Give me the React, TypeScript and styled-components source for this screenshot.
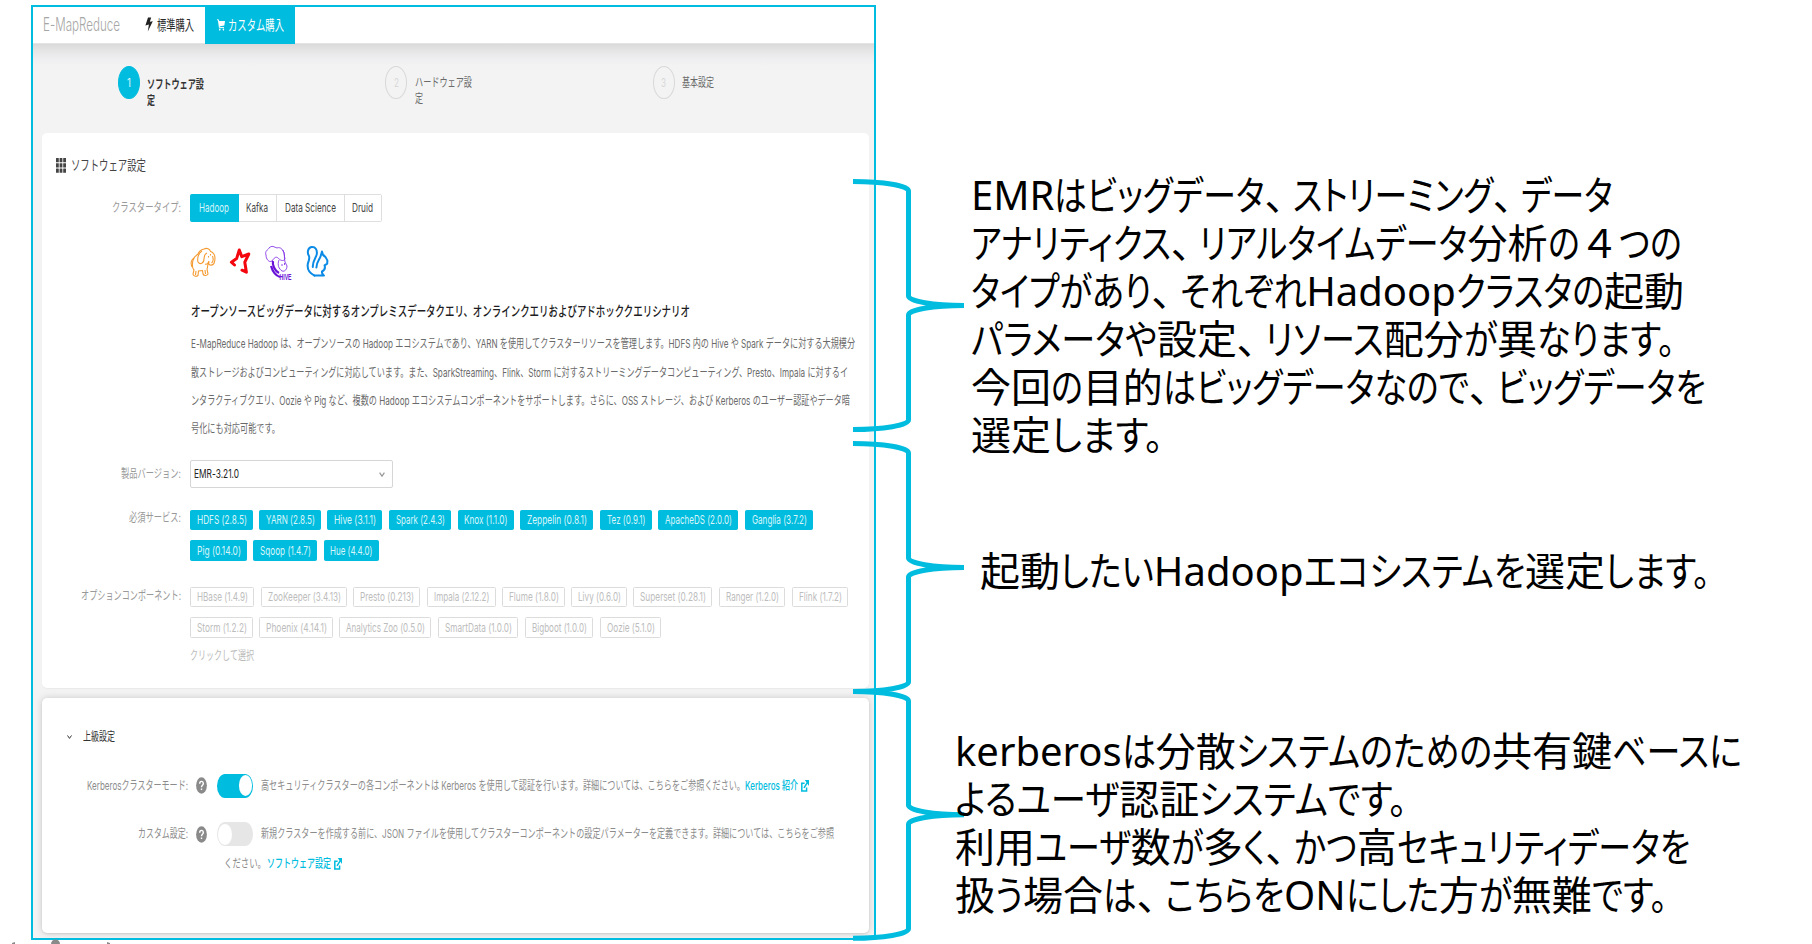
import React, { ReactNode, useLayoutEffect, useRef, useState } from "react";
import styled, { createGlobalStyle } from "styled-components";

const CYAN = "#00bcde";
const UI = `Inter, Roboto, "Noto Sans CJK JP", sans-serif`;

const Global = createGlobalStyle`
  html, body { margin: 0; padding: 0; background: #fff; }
  * { box-sizing: border-box; }
  svg { display: block; flex: none; }
`;

/* ---------- condensed text ---------- */

interface TextStyle {
  $w: number;
  $size?: number;
  $lh?: number;
  $color?: string;
  $weight?: number;
  $ml?: number;
}

const TextBox = styled.span<TextStyle>`
  display: block;
  flex: none;
  width: ${(p) => p.$w}px;
  height: ${(p) => p.$lh ?? 16}px;
  margin-left: ${(p) => p.$ml ?? 0}px;
  font-size: ${(p) => p.$size ?? 12}px;
  line-height: ${(p) => p.$lh ?? 16}px;
  color: ${(p) => p.$color ?? "#6a6a6a"};
  font-weight: ${(p) => p.$weight ?? 400};
  font-feature-settings: "calt" 0;
  white-space: nowrap;
`;

const TextInner = styled.span`
  display: inline-block;
  transform-origin: 0 50%;
`;

interface TextProps {
  w: number;
  size?: number;
  lh?: number;
  color?: string;
  weight?: number;
  ml?: number;
  children: ReactNode;
}

/** One line of text condensed horizontally to the given width. */
function Text({ w, size, lh, color, weight, ml, children }: TextProps) {
  const ref = useRef<HTMLSpanElement>(null);
  const [scale, setScale] = useState(1);
  useLayoutEffect(() => {
    if (ref.current) {
      const natural = parseFloat(getComputedStyle(ref.current).width);
      if (natural > 0) setScale(w / natural);
    }
  }, [w, children]);
  return (
    <TextBox $w={w} $size={size} $lh={lh} $color={color} $weight={weight} $ml={ml}>
      <TextInner ref={ref} style={{ transform: `scaleX(${scale})` }}>
        {children}
      </TextInner>
    </TextBox>
  );
}

/* ---------- page ---------- */

const Page = styled.div`
  position: relative;
  display: flex;
  width: 1812px;
  height: 944px;
  overflow: hidden;
  background: #fff;
  padding: 5px 0 0 31px;
`;

const Frame = styled.section`
  flex: none;
  width: 845px;
  height: 935px;
  overflow: hidden;
  border: 2px solid ${CYAN};
  background: #f3f3f3;
  font-family: ${UI};
`;

const Header = styled.header`
  display: flex;
  align-items: center;
  height: 37px;
  padding-left: 10px;
  background: #fff;
  border-bottom: 1px solid #e4e4e4;
`;

const Tab = styled.div<{ $active?: boolean }>`
  display: flex;
  align-items: center;
  height: 37px;
  width: ${(p) => (p.$active ? 90 : 62)}px;
  margin-left: ${(p) => (p.$active ? 0 : 23)}px;
  padding: 0 0 2px ${(p) => (p.$active ? 11.5 : 1.5)}px;
  margin-bottom: -1px;
  background: ${(p) => (p.$active ? CYAN : "transparent")};
`;

const Steps = styled.div`
  display: flex;
  height: 89px;
  padding: 22px 0 0 84.5px;
  background: linear-gradient(#dadada 0, #e6e6e7 7px, #efeff1 15px, #f3f3f3 22px);
`;

const Step = styled.div`
  display: flex;
  flex: none;
  width: 267.6px;
`;

const StepDot = styled.div<{ $on?: boolean }>`
  display: flex;
  flex: none;
  justify-content: center;
  align-items: center;
  width: 22px;
  height: 33px;
  border-radius: 50%;
  border: 1.5px solid ${(p) => (p.$on ? CYAN : "#d8d8d8")};
  background: ${(p) => (p.$on ? CYAN : "transparent")};
`;

const StepLabel = styled.div<{ $top: number }>`
  padding: ${(p) => p.$top}px 0 0 7.5px;
`;

const Card = styled.div<{ $h: number; $raised?: boolean }>`
  display: flow-root;
  width: 827px;
  height: ${(p) => p.$h}px;
  margin: 0 0 10px 9px;
  border-radius: 5px;
  background: #fff;
  box-shadow: ${(p) =>
    p.$raised ? "0 0 7px rgba(0,0,0,.17), 0 1px 2px rgba(0,0,0,.08)" : "0 1px 1px rgba(0,0,0,.04)"};
`;

const Row = styled.div<{ $mt?: number; $pl?: number; $h?: number }>`
  display: flex;
  align-items: center;
  margin-top: ${(p) => p.$mt ?? 0}px;
  padding-left: ${(p) => p.$pl ?? 0}px;
  height: ${(p) => p.$h ?? 16}px;
`;

const Description = styled.div`
  padding: 9px 0 0 148.5px;
`;

const Field = styled.div<{ $mt?: number }>`
  display: flex;
  align-items: flex-start;
  margin-top: ${(p) => p.$mt ?? 0}px;
`;

const FieldLabel = styled.div<{ $top?: number }>`
  display: flex;
  justify-content: flex-end;
  flex: none;
  width: 138.5px;
  margin-right: 9.5px;
  padding-top: ${(p) => p.$top ?? 0}px;
`;

const Segments = styled.div`
  display: flex;
  width: 192px;
  height: 28px;
  border: 1px solid #dedede;
  border-radius: 2px;
`;

const Segment = styled.div<{ $w: number; $on?: boolean }>`
  display: flex;
  align-items: center;
  justify-content: center;
  width: ${(p) => p.$w}px;
  height: ${(p) => (p.$on ? 28 : 26)}px;
  margin: ${(p) => (p.$on ? "-1px 0 0 -1px" : "0")};
  border-radius: ${(p) => (p.$on ? "2px 0 0 2px" : "0")};
  background: ${(p) => (p.$on ? CYAN : "#fff")};
  & + & { border-right: 1px solid #dedede; }
  &:last-child { border-right: 0; }
`;

const Logos = styled.div`
  display: flex;
  height: 36px;
  margin: 23px 0 0 148px;
`;

const Select = styled.div`
  display: flex;
  align-items: center;
  justify-content: space-between;
  width: 203px;
  height: 28px;
  padding: 0 7px 0 3px;
  border: 1px solid #d6d6d6;
  border-radius: 2px;
`;

const TagRow = styled.div<{ $mt?: number }>`
  display: flex;
  height: 21px;
  margin-top: ${(p) => p.$mt ?? 0}px;
`;

const Tag = styled.div<{ $w: number; $gap: number; $solid?: boolean }>`
  display: flex;
  flex: none;
  align-items: center;
  justify-content: center;
  width: ${(p) => p.$w}px;
  height: 20.5px;
  margin-left: ${(p) => p.$gap}px;
  border: 1px solid ${(p) => (p.$solid ? CYAN : "#dcdcdc")};
  border-radius: 1.5px;
  background: ${(p) => (p.$solid ? CYAN : "#fff")};
`;

const Switch = styled.div<{ $on?: boolean }>`
  display: flex;
  align-items: center;
  justify-content: ${(p) => (p.$on ? "flex-end" : "flex-start")};
  width: 36px;
  height: 24px;
  margin-left: 10px;
  padding: 0 1px;
  border-radius: 8px / 12px;
  background: ${(p) => (p.$on ? CYAN : "#e6e6e6")};
`;

const Knob = styled.div`
  width: 13.5px;
  height: 21px;
  border-radius: 50%;
  background: #fff;
`;

const OptionLabel = styled.div`
  display: flex;
  justify-content: flex-end;
  width: 145.5px;
  margin-right: 8.5px;
`;

/* ---------- annotations ---------- */

const Notes = styled.aside`
  position: relative;
  z-index: 2;
  flex: none;
  padding-top: 166px;
  margin-left: 79px;
  font-family: "Noto Sans", "Noto Sans CJK JP", sans-serif;
  font-size: 40px;
  line-height: 48px;
  color: #000;
`;

const Note = styled.div<{ $ml: number; $mb: number }>`
  margin: 0 0 ${(p) => p.$mb}px ${(p) => p.$ml}px;
`;

const NoteRow = styled.div`
  display: flex;
  height: 48px;
  white-space: nowrap;
`;

const Run = styled.span<{ $kind: "kana" | "comma" | "wide" | "plain" }>`
  display: block;
  flex: none;
  transform-origin: 0 50%;
  font-feature-settings: ${(p) => (p.$kind === "wide" ? "normal" : '"palt"')};
  padding-right: ${(p) => (p.$kind === "comma" ? 8 : 0)}px;
`;

function kindOf(s: string) {
  if (s === "、") return "comma" as const;
  if (s === "４") return "wide" as const;
  return /^[\u3040-\u30ff。]/.test(s) ? ("kana" as const) : ("plain" as const);
}

/** A line whose kana runs are condensed until it fills the given width. */
function NoteLine({ text, w }: { text: string; w: number }) {
  const runs = text.match(/、|４|[\u3040-\u30ff。]+|[^\u3040-\u30ff。、４]+/g) ?? [];
  const ref = useRef<HTMLDivElement>(null);
  const [fit, setFit] = useState<{ k: number; widths: number[] }>({ k: 1, widths: [] });
  useLayoutEffect(() => {
    if (!ref.current) return;
    const widths = Array.from(ref.current.children).map((el) => parseFloat(getComputedStyle(el).width));
    let kana = 0;
    let rest = 0;
    runs.forEach((r, i) => {
      if (kindOf(r) === "kana") kana += widths[i];
      else rest += widths[i];
    });
    setFit({ k: (w - rest) / kana, widths });
  }, [text, w]);
  return (
    <NoteRow ref={ref}>
      {runs.map((r, i) => {
        const kind = kindOf(r);
        const squeeze =
          kind === "kana" && fit.widths.length
            ? { transform: `scaleX(${fit.k})`, marginRight: (fit.k - 1) * fit.widths[i] }
            : undefined;
        return (
          <Run key={i} $kind={kind} style={squeeze}>
            {r}
          </Run>
        );
      })}
    </NoteRow>
  );
}

const Braces = styled.svg`
  position: absolute;
  z-index: 1;
  left: 0;
  top: 0;
`;

function brace(top: number, tip: number, bottom: number) {
  return (
    `M853 ${top} A55.5 9.5 0 0 1 908.5 ${top + 9.5} V${tip - 9.5} A55.5 9.5 0 0 0 964 ${tip} ` +
    `A55.5 9.5 0 0 0 908.5 ${tip + 9.5} V${bottom - 9.5} A55.5 9.5 0 0 1 853 ${bottom}`
  );
}

/* ---------- icons ---------- */

const Bolt = () => (
  <svg width="8" height="15" viewBox="0 0 8 15">
    <path d="M3 0.5H6.2L4.8 4.8L7.8 4.2L2.8 14.6L3.9 7.6L0.4 8.4Z" fill="#222" />
  </svg>
);

const Cart = () => (
  <svg width="8" height="12" viewBox="0 0 8 12">
    <path d="M0 .8H1.4L2.4 8.6H7" stroke="#fff" strokeWidth="1" fill="none" />
    <path d="M1.7 2H8L7.3 6.6L2.3 7.4Z" fill="#fff" />
    <ellipse cx="2.8" cy="10.6" rx=".8" ry="1.1" fill="#fff" />
    <ellipse cx="6.4" cy="10.6" rx=".8" ry="1.1" fill="#fff" />
  </svg>
);

const GridIcon = () => (
  <svg width="10" height="15" viewBox="0 0 10 15" fill="#444">
    {[0, 1, 2].map((r) =>
      [0, 1, 2].map((c) => (
        <rect key={`${r}${c}`} x={c * 3.6} y={r * 5.3} width="2.8" height="4.2" rx=".3" />
      ))
    )}
  </svg>
);

const Elephant = () => (
  <svg width="26" height="34" viewBox="0 0 26 34" fill="none" stroke="#f59a30" strokeWidth="1.1">
    <path d="M8 9C9 6 12 4.5 14 4C17 2.5 20 4 20.5 6.5C23 7 25 10 25 13C25 17 24 21 20 20C18.5 19.5 18.5 18 19 17C17 20 18 22 17 24L18 29C17 31 13.5 31 13 29L12.5 25.5L8.5 26L8 30.5C6 32 3 31 3 29L4 25C2 23 1.5 17 4.5 12Z" />
    <path d="M12 6C8.5 8 7 13 8 17C10 20 14 18.5 14 14C14.5 11 14 9 17 8M18.5 11V12.5M20.5 9V10.5M15 19C17 20 18.5 18 19 16M22.5 11C23.5 14 23 17 21.5 18" />
    <path d="M4 13C1 15 .8 19 2 22M6 26L5.5 30M15 25L15.5 29" />
  </svg>
);

const Star = () => (
  <svg width="22" height="34" viewBox="0 0 22 34">
    <path
      d="M5.5 20L2.4 17.2L7.6 13.6L10.3 5L12.8 11.6L19.8 9L15.8 17.2L17.4 27.2L13 25.2"
      fill="none" stroke="#f3060d" strokeWidth="3" strokeLinejoin="round" strokeLinecap="round"
    />
  </svg>
);

const HiveWord = styled.text`
  font: 700 9px "Liberation Sans", sans-serif;
`;

const Hive = () => (
  <svg width="27" height="36" viewBox="0 0 27 36" fill="none" stroke="#8436e6" strokeWidth=".9">
    <path d="M1 10C-.5 6 3 5 4 3C7 0 9 2 12 3C14 2 17 3 18 6C20 8 19 11 20 14C18 17 15 15 13 13C11 11 9 13 7 16C4 18 1 14 1 10Z" />
    <path d="M18 5C20 9 19 13 20 17L22 21C22 24 20 27 17 26C14 24 12 20 14 15M17 19V21M19.5 18V20" />
    <path d="M8 16C7 20 10 26 14 28M6 21C8 28 12 31 15 32" strokeWidth="2.2" stroke="#6a13d8" />
    <HiveWord x="14.5" y="34.8" textLength="12" lengthAdjust="spacingAndGlyphs" fill="#6a13d8" stroke="none">HIVE</HiveWord>
  </svg>
);

const Squirrel = () => (
  <svg width="24" height="34" viewBox="0 0 24 34" fill="none" stroke="#0b8ae6" strokeWidth="2" strokeLinejoin="round" strokeLinecap="round">
    <path d="M8.5 30.6C3 28 1 24 1.8 19C2.4 16 4 14 3 11C1 8 1.5 2.8 5.5 2C9.5 1.5 11.3 5 10.8 9C10.3 13 6.6 15 6.8 22" />
    <path d="M8.5 30.6H18C17 29.5 15.6 29 16 26.5C18 25.5 19.4 23 18.6 20.4L21.2 18.6L21.4 15.4C20.6 12.6 19 11 17 10L16 6.5L14.6 11.2C13.8 14.5 10.6 16.5 10.4 22.5" />
  </svg>
);

const Help = () => (
  <svg width="11" height="17" viewBox="0 0 11 17">
    <ellipse cx="5.5" cy="8.5" rx="5.4" ry="8.3" fill="#8a8a8a" />
    <path d="M3.7 6.7C3.7 3.6 7.3 3.6 7.3 6.5C7.3 8.4 5.5 8.3 5.5 10.2M5.5 11.4V13" stroke="#fff" strokeWidth="1.4" fill="none" />
  </svg>
);

const External = () => (
  <svg width="8" height="12" viewBox="0 0 8 12" fill="none" stroke={CYAN} strokeWidth="1.5">
    <path d="M3.6 3.2H.8V11H5.6V7.4M3 7.8L6.8 1.8" />
    <path d="M3.8 0H8V6Z" fill={CYAN} stroke="none" />
  </svg>
);

const Chevron = ({ w, h, color }: { w: number; h: number; color: string }) => (
  <svg width={w} height={h} viewBox="0 0 6 5" preserveAspectRatio="none">
    <path d="M.6 .6L3 4.2L5.4 .6" fill="none" stroke={color} strokeWidth="1.2" />
  </svg>
);

const Specks = styled.svg`
  position: absolute;
  left: 0;
  top: 936px;
`;

/* ---------- data ---------- */

type TagSpec = [label: string, left: number, right: number];

const required: TagSpec[][] = [
  [
    ["HDFS (2.8.5)", 190, 253], ["YARN (2.8.5)", 259, 321], ["Hive (3.1.1)", 327, 382],
    ["Spark (2.4.3)", 389, 451], ["Knox (1.1.0)", 457.5, 514], ["Zeppelin (0.8.1)", 520, 593],
    ["Tez (0.9.1)", 600, 651.5], ["ApacheDS (2.0.0)", 658, 738], ["Ganglia (3.7.2)", 745, 813],
  ],
  [["Pig (0.14.0)", 190, 247], ["Sqoop (1.4.7)", 253, 317], ["Hue (4.4.0)", 323.5, 379]],
];

const optional: TagSpec[][] = [
  [
    ["HBase (1.4.9)", 190, 254], ["ZooKeeper (3.4.13)", 261, 347], ["Presto (0.213)", 353, 420],
    ["Impala (2.12.2)", 427, 495.5], ["Flume (1.8.0)", 502, 565], ["Livy (0.6.0)", 571, 627],
    ["Superset (0.28.1)", 633, 712], ["Ranger (1.2.0)", 719, 785], ["Flink (1.7.2)", 792, 848],
  ],
  [
    ["Storm (1.2.2)", 190, 253], ["Phoenix (4.14.1)", 259, 333], ["Analytics Zoo (0.5.0)", 339, 431],
    ["SmartData (1.0.0)", 438, 518], ["Bigboot (1.0.0)", 525, 593], ["Oozie (5.1.0)", 600, 661],
  ],
];

function Tags({ rows, solid }: { rows: TagSpec[][]; solid?: boolean }) {
  return (
    <div>
      {rows.map((row, r) => (
        <TagRow key={r} $mt={r ? 9.5 : 0}>
          {row.map(([label, left, right], i) => (
            <Tag key={label} $w={right - left} $gap={i ? left - row[i - 1][2] : 0} $solid={solid}>
              <Text w={right - left - 13} color={solid ? "#d9f6fb" : "#bdbdbd"}>{label}</Text>
            </Tag>
          ))}
        </TagRow>
      ))}
    </div>
  );
}

const notes: { ml: number; mb: number; lines: [string, number][] }[] = [
  {
    ml: 16, mb: 88,
    lines: [
      ["EMRはビッグデータ、ストリーミング、データ", 642],
      ["アナリティクス、リアルタイムデータ分析の４つの", 711],
      ["タイプがあり、それぞれHadoopクラスタの起動", 713],
      ["パラメータや設定、リソース配分が異なります。", 704],
      ["今回の目的はビッグデータなので、ビッグデータを", 735],
      ["選定します。", 192],
    ],
  },
  { ml: 25, mb: 132, lines: [["起動したいHadoopエコシステムを選定します。", 730]] },
  {
    ml: 0, mb: 0,
    lines: [
      ["kerberosは分散システムのための共有鍵ベースに", 787],
      ["よるユーザ認証システムです。", 452],
      ["利用ユーザ数が多く、かつ高セキュリティデータを", 735],
      ["扱う場合は、こちらをONにした方が無難です。", 712],
    ],
  },
];

const paragraph: [string, number][] = [
  ["E-MapReduce Hadoop は、オープンソースの Hadoop エコシステムであり、YARN を使用してクラスターリソースを管理します。HDFS 内の Hive や Spark データに対する大規模分", 664],
  ["散ストレージおよびコンピューティングに対応しています。また、SparkStreaming、Flink、Storm に対するストリーミングデータコンピューティング、Presto、Impala に対するイ", 657],
  ["ンタラクティブクエリ、Oozie や Pig など、複数の Hadoop エコシステムコンポーネントをサポートします。さらに、OSS ストレージ、および Kerberos のユーザー認証やデータ暗", 659],
  ["号化にも対応可能です。", 89],
];

export default function App() {
  return (
    <Page>
      <Global />
      <Frame>
        <Header>
          <Text w={77} size={18} lh={22} weight={300} color="#a6a6a6">E-MapReduce</Text>
          <Tab>
            <Bolt />
            <Text w={37} size={14} lh={20} ml={4} color="#2a2a2a">標準購入</Text>
          </Tab>
          <Tab $active>
            <Cart />
            <Text w={56} size={14} lh={20} ml={3} color="#fff">カスタム購入</Text>
          </Tab>
        </Header>
        <Steps>
          <Step>
            <StepDot $on><Text w={4} color="#d5f5fb">1</Text></StepDot>
            <StepLabel $top={11}>
              <Text w={57} weight={600} color="#333">ソフトウェア設</Text>
              <Text w={8} weight={600} color="#333">定</Text>
            </StepLabel>
          </Step>
          <Step>
            <StepDot><Text w={5} color="#d8d8d8">2</Text></StepDot>
            <StepLabel $top={8.5}>
              <Text w={57}>ハードウェア設</Text>
              <Text w={8}>定</Text>
            </StepLabel>
          </Step>
          <Step>
            <StepDot><Text w={5} color="#d8d8d8">3</Text></StepDot>
            <StepLabel $top={8.5}>
              <Text w={32}>基本設定</Text>
            </StepLabel>
          </Step>
        </Steps>
        <Card $h={554.5}>
          <Row $pl={14} $h={64}>
            <GridIcon />
            <Text w={75} size={14} lh={20} ml={4.5} color="#444">ソフトウェア設定</Text>
          </Row>
          <Field $mt={-3}>
            <FieldLabel $top={6}><Text w={69} color="#999">クラスタータイプ:</Text></FieldLabel>
            <Segments>
              <Segment $w={48.5} $on><Text w={30} color="#d5f5fb">Hadoop</Text></Segment>
              <Segment $w={38}><Text w={22} color="#444">Kafka</Text></Segment>
              <Segment $w={68}><Text w={51} color="#444">Data Science</Text></Segment>
              <Segment $w={36.5}><Text w={21} color="#444">Druid</Text></Segment>
            </Segments>
          </Field>
          <Logos>
            <Elephant />
            <Row $pl={13} $h={34}><Star /></Row>
            <Row $pl={14} $h={36}><Hive /></Row>
            <Row $pl={14} $h={34}><Squirrel /></Row>
          </Logos>
          <Row $mt={20} $pl={148.5} $h={20}>
            <Text w={499} size={13.5} lh={20} weight={500} color="#1c1c22">
              オープンソースビッグデータに対するオンプレミスデータクエリ、オンラインクエリおよびアドホッククエリシナリオ
            </Text>
          </Row>
          <Description>
            {paragraph.map(([line, w]) => (
              <Row key={w} $h={28.4}>
                <Text w={w}>{line}</Text>
              </Row>
            ))}
          </Description>
          <Field $mt={16.5}>
            <FieldLabel $top={6}><Text w={60} color="#999">製品バージョン:</Text></FieldLabel>
            <Select>
              <Text w={45} color="#222">EMR-3.21.0</Text>
              <Chevron w={6} h={5} color="#999" />
            </Select>
          </Field>
          <Field $mt={21.8}>
            <FieldLabel $top={0.5}><Text w={52} color="#999">必須サービス:</Text></FieldLabel>
            <Tags rows={required} solid />
          </Field>
          <Field $mt={25.5}>
            <FieldLabel $top={1}><Text w={100} color="#999">オプションコンポーネント:</Text></FieldLabel>
            <Tags rows={optional} />
          </Field>
          <Row $mt={9.5} $pl={148}>
            <Text w={64} color="#bbb">クリックして選択</Text>
          </Row>
        </Card>
        <Card $h={235.5} $raised>
          <Row $pl={25} $h={79}>
            <Chevron w={5} h={4} color="#333" />
            <Text w={32} ml={11} color="#333">上級設定</Text>
          </Row>
          <Row $mt={-3} $h={24}>
            <OptionLabel><Text w={101} color="#8c8c8c">Kerberosクラスターモード:</Text></OptionLabel>
            <Help />
            <Switch $on><Knob /></Switch>
            <Text w={484} ml={8} color="#8c8c8c">高セキュリティクラスターの各コンポーネントは Kerberos を使用して認証を行います。詳細については、こちらをご参照ください。</Text>
            <Text w={53} ml={0} color={CYAN} weight={500}>Kerberos 紹介</Text>
            <Row $pl={3}><External /></Row>
          </Row>
          <Row $mt={24.5} $h={24}>
            <OptionLabel><Text w={50} color="#8c8c8c">カスタム設定:</Text></OptionLabel>
            <Help />
            <Switch><Knob /></Switch>
            <Text w={573} ml={8} color="#8c8c8c">新規クラスターを作成する前に、JSON ファイルを使用してクラスターコンポーネントの設定パラメーターを定義できます。詳細については、こちらをご参照</Text>
          </Row>
          <Row $mt={7.5} $pl={182} $h={20}>
            <Text w={42} color="#8c8c8c">ください。</Text>
            <Text w={64} ml={1} color={CYAN} weight={500}>ソフトウェア設定</Text>
            <Row $pl={2.5}><External /></Row>
          </Row>
        </Card>
      </Frame>
      <Notes>
        {notes.map((n) => (
          <Note key={n.ml} $ml={n.ml} $mb={n.mb}>
            {n.lines.map(([line, w]) => (
              <NoteLine key={line} text={line} w={w} />
            ))}
          </Note>
        ))}
      </Notes>
      <Braces width="1000" height="944" fill="none" stroke={CYAN} strokeWidth="5">
        <path d={brace(181.5, 305.5, 429.5)} />
        <path d={brace(443.5, 567.5, 691.5)} />
        <path d={brace(691.5, 814.7, 938.3)} />
      </Braces>
      <Specks width="120" height="8" fill="#8a8a8a">
        <path d="M12 7L15 6V8H12ZM107 6L110 7V8H107Z" />
        <ellipse cx="55.5" cy="8" rx="4.5" ry="4.5" />
      </Specks>
    </Page>
  );
}
